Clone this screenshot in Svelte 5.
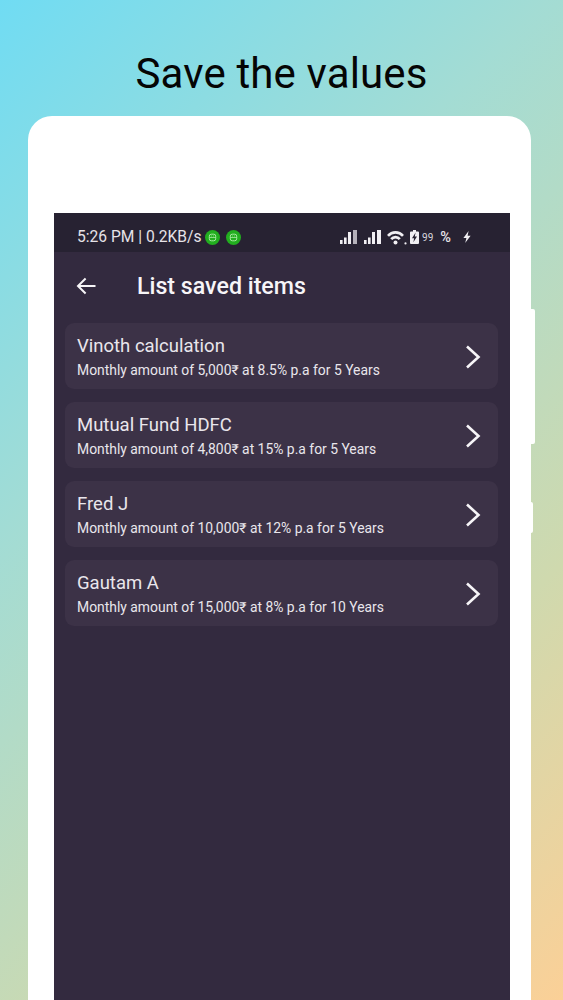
<script>
  const items = [
    { name: 'Vinoth calculation', detail: 'Monthly amount of 5,000₹ at 8.5% p.a for 5 Years' },
    { name: 'Mutual Fund HDFC', detail: 'Monthly amount of 4,800₹ at 15% p.a for 5 Years' },
    { name: 'Fred J', detail: 'Monthly amount of 10,000₹ at 12% p.a for 5 Years' },
    { name: 'Gautam A', detail: 'Monthly amount of 15,000₹ at 8% p.a for 10 Years' }
  ];
</script>

<div class="page">
  <h1>Save the values</h1>
  <div class="phone">
    <span class="side-btn long"></span>
    <span class="side-btn short"></span>
    <div class="screen">
      <div class="status">
        <div class="status-left">
          <span>5:26 PM | 0.2KB/s</span>
          {#each [0, 1] as i}
            <svg class="bot" class:second={i === 1} viewBox="0 0 15 15" width="15" height="15">
              <circle cx="7.5" cy="7.5" r="7.5" fill="#22ae1f" />
              <rect x="4.3" y="4.2" width="6.4" height="6.6" rx="2" fill="none" stroke="#a6e8a0" stroke-width="1" />
              <path d="M4.3 7.5h6.4" stroke="#a6e8a0" stroke-width="0.8" />
              <path d="M6 6h.8M8.2 6H9" stroke="#a6e8a0" stroke-width="0.8" />
            </svg>
          {/each}
        </div>
        <div class="status-right">
          <svg viewBox="0 0 18 16" width="18" height="16" fill="#f1eff3">
            <rect x="0" y="11" width="2.6" height="4" /><rect x="4" y="8.5" width="2.6" height="6.5" />
            <rect x="8" y="3" width="3" height="12" /><rect x="13" y="1" width="4" height="14" fill="#b5b1ba" />
          </svg>
          <svg class="sim2" viewBox="0 0 18 16" width="18" height="16" fill="#f1eff3">
            <rect x="0" y="11" width="2.6" height="4" /><rect x="4" y="8.5" width="2.6" height="6.5" />
            <rect x="8" y="3" width="3" height="12" /><rect x="13" y="1" width="4" height="14" />
          </svg>
          <svg class="wifi" viewBox="0 0 20 15" width="20" height="15" fill="none" stroke="#f1eff3" stroke-width="2.6">
            <path d="M1 5.8C5 1.2 12 1.2 16 5.8" /><path d="M4.2 9.2C6.5 6.4 10.5 6.4 12.8 9.2" />
            <circle cx="8.5" cy="12.4" r="2" fill="#f1eff3" stroke="none" />
            <circle cx="18.5" cy="13.4" r="1.1" fill="#f1eff3" stroke="none" />
          </svg>
          <svg class="batt" viewBox="0 0 9 14" width="9" height="14">
            <path d="M3 0h3v1.4h2a1 1 0 0 1 1 1V13a1 1 0 0 1-1 1H1a1 1 0 0 1-1-1V2.4a1 1 0 0 1 1-1h2z" fill="#f1eff3" />
            <path d="M5.6 2.6L2 8.2h2.1L3.4 12.2 7 6.4H4.8z" fill="#272232" />
          </svg>
          <span class="pct-num">99</span>
          <span class="pct">%</span>
          <svg class="bolt" viewBox="0 0 10 14" width="10" height="14">
            <path d="M6.6 1L1.4 8h3L3.2 13l5.4-7.2h-3z" fill="#f1eff3" />
          </svg>
        </div>
      </div>
      <div class="toolbar">
        <svg viewBox="0 0 20 18" width="20" height="18" fill="none" stroke="#f7f5f8" stroke-width="2">
          <path d="M19.5 9H2M9.6 1.5L2 9l7.6 7.5" />
        </svg>
        <h2>List saved items</h2>
      </div>
      <ul class="list">
        {#each items as item}
          <li class="card">
            <div class="text">
              <div class="name">{item.name}</div>
              <div class="detail">{item.detail}</div>
            </div>
            <svg viewBox="0 0 16 24" width="16" height="24" fill="none" stroke="#f7f5f8" stroke-width="2.6">
              <path d="M2 1.5L13.5 12 2 22.5" />
            </svg>
          </li>
        {/each}
      </ul>
    </div>
  </div>
</div>

<style>
  :global(body) {
    margin: 0;
  }
  .page {
    position: relative;
    height: 1000px;
    overflow: hidden;
    background: linear-gradient(135deg, #70dcf3 0%, #a3dcd4 35%, #cfd9ae 72%, #fbd097 100%);
    font-family: Roboto, "Liberation Sans", sans-serif;
    box-sizing: border-box;
    padding-top: 49px;
  }
  h1 {
    margin: 0;
    height: 67px;
    text-align: center;
    font-size: 42px;
    line-height: 50px;
    font-weight: 400;
    letter-spacing: 0.13px;
    color: #050505;
  }
  .phone {
    position: relative;
    margin: 0 32px 0 28px;
    padding: 97px 21px 0 26px;
    height: 884px;
    box-sizing: border-box;
    background: #fff;
    border-radius: 24px 24px 0 0;
  }
  .side-btn {
    position: absolute;
    left: 100%;
    width: 4px;
    background: #fff;
    border-radius: 0 2px 2px 0;
  }
  .side-btn.long {
    top: 193px;
    height: 135px;
  }
  .side-btn.short {
    top: 386px;
    width: 2px;
    height: 31px;
  }
  .screen {
    height: 100%;
    background: #332a3f;
  }
  .status {
    height: 39px;
    box-sizing: border-box;
    padding: 9px 38px 0 23px;
    background: #272232;
    display: flex;
    align-items: center;
    justify-content: space-between;
    color: #e6e3e8;
    font-size: 15.6px;
  }
  .status-left {
    display: flex;
    align-items: center;
  }
  .bot {
    margin-left: 3px;
  }
  .bot.second {
    margin-left: 6px;
  }
  .status-right {
    display: flex;
    align-items: center;
  }
  .sim2 {
    margin-left: 6px;
  }
  .wifi {
    margin-left: 5px;
  }
  .batt {
    margin-left: 3px;
  }
  .pct-num {
    font-size: 10px;
    margin-left: 3px;
    color: #d8d5dc;
  }
  .pct {
    font-size: 14.5px;
    font-weight: 500;
    margin-left: 7px;
  }
  .bolt {
    margin-left: 11px;
  }
  .toolbar {
    height: 68px;
    display: flex;
    align-items: center;
    padding-left: 22px;
  }
  h2 {
    margin: 0 0 0 41px;
    font-size: 23.2px;
    font-weight: 500;
    color: #f7f5f8;
  }
  .list {
    list-style: none;
    margin: 3px 12px 0 11px;
    padding: 0;
    display: flex;
    flex-direction: column;
    gap: 13px;
  }
  .card {
    height: 66px;
    box-sizing: border-box;
    padding: 1px 17px 0 12px;
    display: flex;
    align-items: center;
    justify-content: space-between;
    background: #3c3247;
    border-radius: 9px;
  }
  .name {
    font-size: 18.5px;
    line-height: 24px;
    color: #e9e6ec;
    margin-top: -1px;
  }
  .detail {
    margin-top: 4px;
    font-size: 13.9px;
    line-height: 17px;
    color: #e9e6ec;
  }
</style>
